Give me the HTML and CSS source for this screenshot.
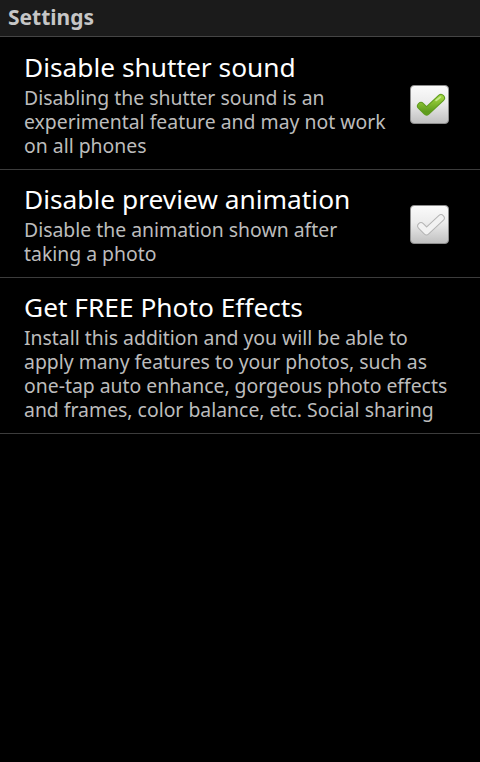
FILE: index.html
```html
<!DOCTYPE html>
<html>
<head>
<meta charset="utf-8">
<link rel="stylesheet" href="styles.css">
</head>
<body>
<div class="titlebar">Settings</div>
<div class="list">
  <div class="pref first">
    <div class="text">
      <div class="title">Disable shutter sound</div>
      <div class="summary">Disabling the shutter sound is an experimental feature and may not work on all phones</div>
    </div>
    <div class="check">
      <svg width="39" height="39" viewBox="0 0 39 39">
        <defs>
          <linearGradient id="bg1" x1="0" y1="0" x2="0" y2="1">
            <stop offset="0" stop-color="#fbfbfb"/>
            <stop offset="0.45" stop-color="#ececec"/>
            <stop offset="1" stop-color="#bfbfbf"/>
          </linearGradient>
          <linearGradient id="gr" x1="0" y1="0" x2="0" y2="1">
            <stop offset="0" stop-color="#9bd13c"/>
            <stop offset="1" stop-color="#5f9c1c"/>
          </linearGradient>
        </defs>
        <rect x="0.5" y="0.5" width="38" height="38" rx="3.5" fill="url(#bg1)" stroke="#8d8d8d"/>
        <path d="M11 21 L16.5 26.5 L31 13" fill="none" stroke="#5e9a1e" stroke-width="8" stroke-linecap="round" stroke-linejoin="round"/>
        <path d="M11 21 L16.5 26.5 L31 13" fill="none" stroke="url(#gr)" stroke-width="6" stroke-linecap="round" stroke-linejoin="round"/>
        <path d="M26 15.5 L30.5 12" fill="none" stroke="#c4e88a" stroke-width="1.6" stroke-linecap="round"/>
      </svg>
    </div>
  </div>
  <div class="pref">
    <div class="text">
      <div class="title">Disable preview animation</div>
      <div class="summary">Disable the animation shown after taking a photo</div>
    </div>
    <div class="check">
      <svg width="39" height="39" viewBox="0 0 39 39">
        <defs>
          <linearGradient id="bg2" x1="0" y1="0" x2="0" y2="1">
            <stop offset="0" stop-color="#fbfbfb"/>
            <stop offset="0.45" stop-color="#ececec"/>
            <stop offset="1" stop-color="#bfbfbf"/>
          </linearGradient>
        </defs>
        <rect x="0.5" y="0.5" width="38" height="38" rx="3.5" fill="url(#bg2)" stroke="#8d8d8d"/>
        <path d="M11 21 L16.5 26.5 L31 13" fill="none" stroke="#b4b4b4" stroke-width="7.5" stroke-linecap="round" stroke-linejoin="round"/>
        <path d="M11 21 L16.5 26.5 L31 13" fill="none" stroke="#f2f2f2" stroke-width="5.5" stroke-linecap="round" stroke-linejoin="round"/>
      </svg>
    </div>
  </div>
  <div class="pref last">
    <div class="text">
      <div class="title">Get FREE Photo Effects</div>
      <div class="summary">Install this addition and you will be able to apply many features to your photos, such as one-tap auto enhance, gorgeous photo effects and frames, color balance, etc. Social sharing</div>
    </div>
  </div>
</div>
</body>
</html>
```
FILE: styles.css
```css
html, body {
  margin: 0;
  padding: 0;
  background: #000;
}
body {
  width: 480px;
  height: 762px;
  font-family: "Noto Sans", "Open Sans", sans-serif;
  overflow: hidden;
}
.titlebar {
  box-sizing: border-box;
  background: #1b1b1b;
  border-bottom: 1px solid #454545;
  height: 37px;
  padding-left: 8px;
  color: #c6c6c6;
  font-weight: bold;
  font-size: 21px;
  line-height: 35px;
}
.pref {
  display: flex;
  align-items: center;
  padding: 13px 31px 11px 24px;
  border-bottom: 1px solid #3c3c3c;
}
.pref.first {
  padding-top: 14px;
}
.pref.last {
  padding-right: 28px;
}
.text {
  flex: 1;
  min-width: 0;
}
.title {
  color: #fff;
  font-size: 26.3px;
  line-height: 32px;
}
.summary {
  margin-top: 3px;
  color: #bcbcbc;
  font-size: 19.4px;
  line-height: 24px;
  padding-right: 16px;
}
.last .summary {
  padding-right: 0;
}
.check {
  width: 39px;
  height: 39px;
  flex: none;
}
.check svg {
  display: block;
}
```
